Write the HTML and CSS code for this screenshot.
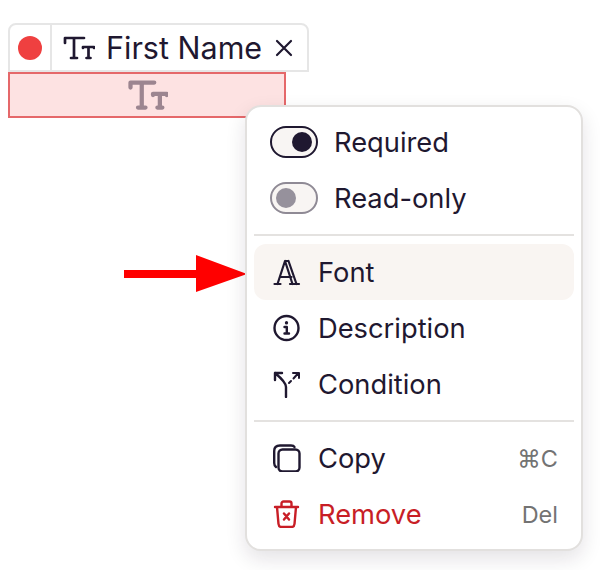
FILE: index.html
```html
<!DOCTYPE html>
<html>
	<head>
		<meta charset="utf-8">
		<title>Field menu</title>
		<link rel="stylesheet" href="styles.css">
	</head>
	<body>
		<div class="tab">
			<div class="tab-dot"><span class="dot"></span></div>
			<div class="tab-main">
				<svg class="icon-text" viewBox="0 0 32 24"><path d="M2 7V2H21M11 2V22M8 22H14M20 12V11H31V12M25.500 11V22M23.500 22H27.500"/></svg>
				<span class="tab-name">First Name</span>
				<svg class="icon-close" viewBox="0 0 18 18"><path d="M2 2L16 16M16 2L2 16"/></svg>
			</div>
		</div>
		<div class="field">
			<svg class="icon-field" viewBox="0 0 32 24"><path d="M2 6V2H21M11 2V22M8 22H14M20 12V11H31V12M25.500 11V22M23.500 22H27.500"/></svg>
		</div>

		<svg class="arrow" viewBox="0 0 124 38"><path d="M0 15H72V0L123 19L72 37V23H0Z"/></svg>

		<div class="menu">
			<div class="row">
				<span class="toggle on"><span class="knob"></span></span>
				<span class="label">Required</span>
			</div>
			<div class="row">
				<span class="toggle off"><span class="knob"></span></span>
				<span class="label">Read-only</span>
			</div>
			<div class="sep"></div>
			<div class="item active">
				<svg class="icon icon-font" viewBox="0 0 28 28"><path d="M1.500 26H7.500M17 26H26M4.500 26L12 3H15.500L23.500 26M7 19H18.500M12 3L19.500 26M15.500 3L23.500 26"/></svg>
				<span>Font</span>
			</div>
			<div class="item">
				<svg class="icon" viewBox="0 0 28 28"><circle cx="13.500" cy="14" r="12"/><path d="M11.500 13H13.800V19.500M11.500 19.500H16"/><path class="dotted" d="M13.500 8.500V9"/></svg>
				<span>Description</span>
			</div>
			<div class="item">
				<svg class="icon" viewBox="0 0 28 28"><path d="M13 27V17C13 13 8 8 2 3M2 10V3H9"/><path class="thin" d="M16 13L18 11M20.500 8.500L24.500 4M20 3H26V8"/></svg>
				<span>Condition</span>
			</div>
			<div class="sep"></div>
			<div class="item">
				<svg class="icon" viewBox="0 0 28 28"><rect x="5.500" y="5.500" width="21" height="22" rx="4"/><path d="M3 23C1.800 22 1.200 21 1.200 19V7C1.200 3.500 3.500 1.500 7 1.500H18C20 1.500 21 2 21.500 3"/></svg>
				<span>Copy</span>
				<span class="key">⌘C</span>
			</div>
			<div class="item danger">
				<svg class="icon" viewBox="0 0 28 28"><path d="M2 7H25M8.500 7V3.500C8.500 2.500 9.500 1.500 10.500 1.500H16.500C17.500 1.500 18.500 2.500 18.500 3.500V7M4 7L5.500 24C5.700 26 6.500 27 8.500 27H18.500C20.500 27 21.300 26 21.500 24L23 7M11 13.500L16 19.500M16 13.500L11 19.500"/></svg>
				<span>Remove</span>
				<span class="key">Del</span>
			</div>
		</div>
	</body>
</html>
```

FILE: styles.css
```css
*{
	margin: 0;
	padding: 0;
	box-sizing: border-box;
}
body{
	background: #fff;
	padding: 23px 0 0 8px;
	font-family: Inter, "Liberation Sans", sans-serif;
	color: #1f1830;
}
svg{
	fill: none;
	stroke: currentColor;
	stroke-linecap: round;
	stroke-linejoin: round;
}
.tab{
	display: flex;
	width: 301px;
	height: 49px;
	border: 2px solid #e6e6e6;
	border-radius: 8px 8px 0 0;
}
.tab-dot{
	display: flex;
	align-items: center;
	justify-content: center;
	width: 42px;
	border-right: 2px solid #e6e6e6;
}
.dot{
	width: 24px;
	height: 24px;
	border-radius: 50%;
	background: #ef4040;
}
.tab-main{
	display: flex;
	align-items: center;
	padding-left: 11px;
}
.icon-text{
	width: 32px;
	height: 24px;
	stroke-width: 2.700;
}
.tab-name{
	margin-left: 11px;
	font-size: 30.500px;
	line-height: 38px;
}
.icon-close{
	width: 18px;
	height: 18px;
	margin-left: 13px;
	stroke-width: 2.2;
}
.field{
	display: flex;
	align-items: center;
	justify-content: center;
	width: 278px;
	height: 46px;
	border: 2px solid #e5686a;
	background: #fde2e2;
}
.icon-field{
	width: 40px;
	height: 30px;
	margin-left: 2px;
	stroke-width: 3.400;
	color: #9c8590;
}
.arrow{
	position: absolute;
	left: 124px;
	top: 255px;
	width: 124px;
	height: 38px;
	fill: #ff0000;
	stroke: none;
}
.menu{
	position: absolute;
	left: 245px;
	top: 105px;
	width: 338px;
	padding: 7px;
	background: #fff;
	border: 2px solid #e2e0de;
	border-radius: 16px;
	box-shadow: 0 8px 20px rgba(30, 20, 40, .12);
	font-size: 27.300px;
}
.row{
	display: flex;
	align-items: center;
	gap: 16px;
	height: 56px;
	padding: 0 16px;
}
.toggle{
	display: flex;
	align-items: center;
	width: 48px;
	height: 32px;
	padding: 0 4px;
	border: 2.500px solid #1f1830;
	border-radius: 16px;
	background: #f8f5f3;
}
.knob{
	width: 20px;
	height: 20px;
	border-radius: 50%;
	background: #1f1830;
}
.toggle.on{
	justify-content: flex-end;
}
.toggle.off{
	border-color: #8f8a95;
}
.toggle.off .knob{
	background: #96919c;
}
.sep{
	height: 2px;
	margin: 8px 0;
	background: #e4e2e0;
}
.item{
	display: flex;
	align-items: center;
	gap: 17px;
	height: 56px;
	padding: 0 16px 0 19px;
	border-radius: 12px;
}
.item.active{
	background: #f9f5f2;
}
.icon{
	width: 28px;
	height: 28px;
	flex: none;
	stroke-width: 2.400;
}
.icon-font{
	stroke-width: 2.200;
}
.icon .dotted{
	stroke-width: 3.200;
}
.icon .thin{
	stroke-width: 2;
}
.key{
	margin-left: auto;
	font-size: 23.500px;
	color: #737373;
}
.danger{
	color: #c81e26;
}
```
